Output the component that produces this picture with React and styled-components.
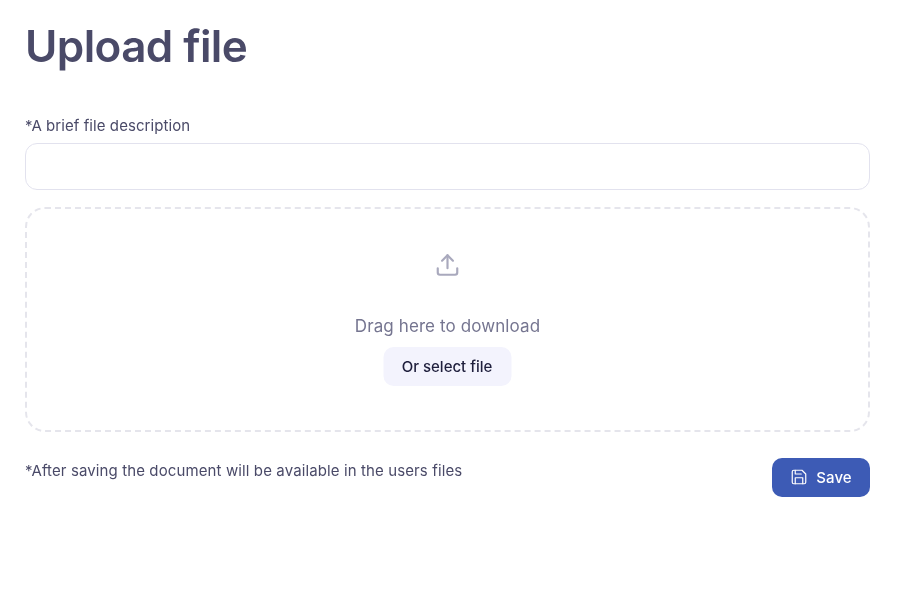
import React from "react";
import styled, { createGlobalStyle } from "styled-components";
import { Upload } from "lucide-react";

const Global = createGlobalStyle`
  html, body { margin: 0; padding: 0; background: #fff; }
  body { font-family: Inter, "Liberation Sans", sans-serif; }
`;

const Page = styled.main`
  box-sizing: border-box;
  width: 900px;
  height: 595px;
  padding: 20px 30px 0 25px;
  display: flex;
  flex-direction: column;
  will-change: transform;
`;

const Title = styled.h1`
  margin: 0;
  font-size: 44px;
  line-height: 53px;
  font-weight: 620;
  letter-spacing: -0.6px;
  color: #4a4a68;
`;

const Label = styled.label`
  display: block;
  margin-top: 43px;
  font-size: 15px;
  line-height: 20px;
  font-weight: 400;
  letter-spacing: 0.07px;
  color: #4a4a68;
`;

const Input = styled.input`
  box-sizing: border-box;
  display: block;
  width: 100%;
  height: 47px;
  margin-top: 7px;
  border: 1px solid #e2e2ee;
  border-radius: 12px;
  background: #fff;
  outline: none;
`;

const DropZone = styled.div`
  box-sizing: border-box;
  margin-top: 17px;
  height: 225px;
  border: 2px dashed #e5e5ec;
  border-radius: 20px;
  display: flex;
  flex-direction: column;
  align-items: center;
  padding-top: 43px;
`;

const UploadIcon = styled(Upload)`
  display: block;
  color: #a9a9bd;
  transform: translateX(-0.5px);
`;

const DropText = styled.p`
  margin: 36px 0 0;
  font-size: 17px;
  line-height: 24px;
  letter-spacing: 0.1px;
  color: #757590;
`;

const SelectButton = styled.button`
  margin-top: 9px;
  width: 128px;
  height: 39px;
  padding: 0;
  border: 0;
  border-radius: 10px;
  background: #f3f3fd;
  color: #1e1e3c;
  font: 500 15px/20px Inter, "Liberation Sans", sans-serif;
  transform: translateX(-0.5px);
`;

const Footer = styled.div`
  display: flex;
  justify-content: space-between;
  align-items: flex-start;
  margin-top: 26px;
`;

const Note = styled.p`
  margin: 2.5px 0 0;
  font-size: 15px;
  line-height: 20px;
  letter-spacing: 0.115px;
  color: #4a4a68;
`;

const SaveButton = styled.button`
  width: 98px;
  height: 39px;
  padding: 0;
  border: 0;
  border-radius: 10px;
  background: #3d5bb5;
  color: #fff;
  font: 450 15px/20px Inter, "Liberation Sans", sans-serif;
  letter-spacing: 0.1px;
  display: flex;
  align-items: center;
  justify-content: center;
  gap: 8px;
`;

const SaveIcon = styled.svg`
  display: block;
  width: 18px;
  height: 18px;
  margin-top: -2px;
  fill: none;
  stroke: currentColor;
  stroke-width: 1.6;
  stroke-linecap: round;
  stroke-linejoin: round;
`;

export default function App() {
  return (
    <Page>
      <Global />
      <Title>Upload file</Title>
      <Label htmlFor="desc">*A brief file description</Label>
      <Input id="desc" />
      <DropZone>
        <UploadIcon size={26} strokeWidth={2} />
        <DropText>Drag here to download</DropText>
        <SelectButton>Or select file</SelectButton>
      </DropZone>
      <Footer>
        <Note>*After saving the document will be available in the users files</Note>
        <SaveButton>
          <SaveIcon viewBox="0 0 24 24">
            <path d="M19 21H5a2 2 0 0 1-2-2V5a2 2 0 0 1 2-2h11l5 5v11a2 2 0 0 1-2 2z" />
            <polyline points="17 21 17 13 7 13 7 21" />
            <polyline points="7 3 7 8 15 8" />
          </SaveIcon>
          Save
        </SaveButton>
      </Footer>
    </Page>
  );
}
